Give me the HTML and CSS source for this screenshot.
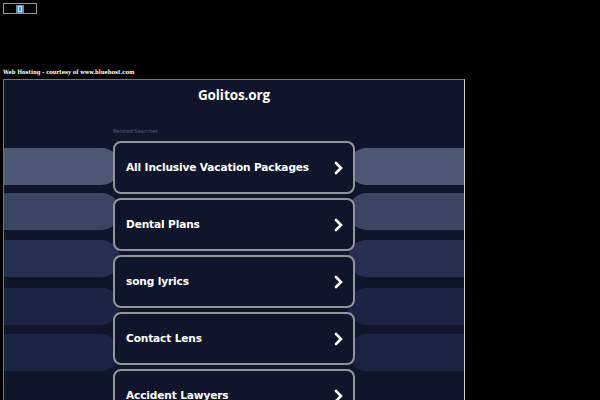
FILE: index.html
```
<!DOCTYPE html>
<html lang="en">
<head>
<meta charset="utf-8">
<title>Golitos.org</title>
<link rel="stylesheet" href="styles.css">
</head>
<body>
<div class="banner"><svg class="broken" width="8" height="8" viewBox="0 0 8 8"><rect width="8" height="8" fill="#5a94b8"/><path d="M2.5 1v6M5.5 1v6M2.5 1.5h3M2.5 6.5h3" stroke="#b9dcf0" fill="none"/></svg></div>
<p class="hosting">Web Hosting - courtesy of www.bluehost.com</p>
<div class="frame">
  <div class="bands">
    <div class="band band-1"><i></i><i></i></div>
    <div class="band band-2"><i></i><i></i></div>
    <div class="band band-3"><i></i><i></i></div>
    <div class="band band-4"><i></i><i></i></div>
    <div class="band band-5"><i></i><i></i></div>
  </div>
  <main class="content">
    <h1><span>Golitos.org</span></h1>
    <p class="related">Related Searches:</p>
    <div class="cards">
      <a class="card"><span>All Inclusive Vacation Packages</span><svg width="10" height="14" viewBox="0 0 10 14"><path d="M2 2l5 5-5 5"/></svg></a>
      <a class="card"><span>Dental Plans</span><svg width="10" height="14" viewBox="0 0 10 14"><path d="M2 2l5 5-5 5"/></svg></a>
      <a class="card"><span>song lyrics</span><svg width="10" height="14" viewBox="0 0 10 14"><path d="M2 2l5 5-5 5"/></svg></a>
      <a class="card"><span>Contact Lens</span><svg width="10" height="14" viewBox="0 0 10 14"><path d="M2 2l5 5-5 5"/></svg></a>
      <a class="card"><span>Accident Lawyers</span><svg width="10" height="14" viewBox="0 0 10 14"><path d="M2 2l5 5-5 5"/></svg></a>
    </div>
  </main>
</div>
</body>
</html>
```
FILE: styles.css
```
* { box-sizing: border-box; }
body {
  margin: 0;
  padding: 3px 3px 0;
  height: 400px;
  overflow: hidden;
  background: #000;
  color: #fff;
}
.banner {
  width: 34px;
  height: 11px;
  border: 1px solid #999;
  display: flex;
  align-items: center;
  justify-content: center;
}
.broken { display: block; }
.hosting {
  margin: 54px 0 0;
  height: 11px;
  font: bold 5.8px/8px "DejaVu Serif Condensed", "DejaVu Serif", serif;
  font-stretch: condensed;
  white-space: nowrap;
}
.frame {
  width: 462px;
  height: 321px;
  border: 1px solid #73757b;
  border-right-color: #d0d1d6;
  border-bottom: 0;
  background: #11152b;
  display: grid;
  grid-template: 320px / 460px;
  overflow: hidden;
}
.bands, .content { grid-area: 1 / 1; }
.bands { padding-top: 68px; }
.band {
  height: 37px;
  display: flex;
  justify-content: space-between;
}
.band i { width: 116px; background: var(--tone); border-radius: 0 19px 19px 0; }
.band i + i { border-radius: 19px 0 0 19px; }
.band-1 { --tone: #4e5773; margin-bottom: 8px; }
.band-2 { --tone: #3c4463; margin-bottom: 10px; }
.band-3 { --tone: #262f50; margin-bottom: 10.5px; }
.band-4 { --tone: #1b2443; margin-bottom: 9.5px; }
.band-5 { --tone: #1a2342; }
.content {
  width: 242px;
  margin-left: 109px;
}
h1 {
  margin: 0;
  padding-top: 5px;
  height: 48px;
  text-align: center;
  font: bold 13.5px/20px "Open Sans", sans-serif;
}
h1 span { display: inline-block; letter-spacing: -0.1px; }
.related {
  margin: 0;
  height: 13px;
  font: 5.2px/6px "DejaVu Sans", sans-serif;
  color: #5a5f76;
}
.cards { display: flex; flex-direction: column; gap: 4px; }
.card {
  height: 53px;
  flex: none;
  border: 2px solid #92949e;
  border-radius: 8px;
  background: #11152b;
  padding: 0 9px 0 11px;
  display: flex;
  align-items: center;
  justify-content: space-between;
  font: bold 10.6px/14px "DejaVu Sans", sans-serif;
  letter-spacing: -0.14px;
  white-space: nowrap;
}
.card span { padding-bottom: 2px; }
.card path { fill: none; stroke: #fff; stroke-width: 2.6; stroke-linecap: round; }
```
